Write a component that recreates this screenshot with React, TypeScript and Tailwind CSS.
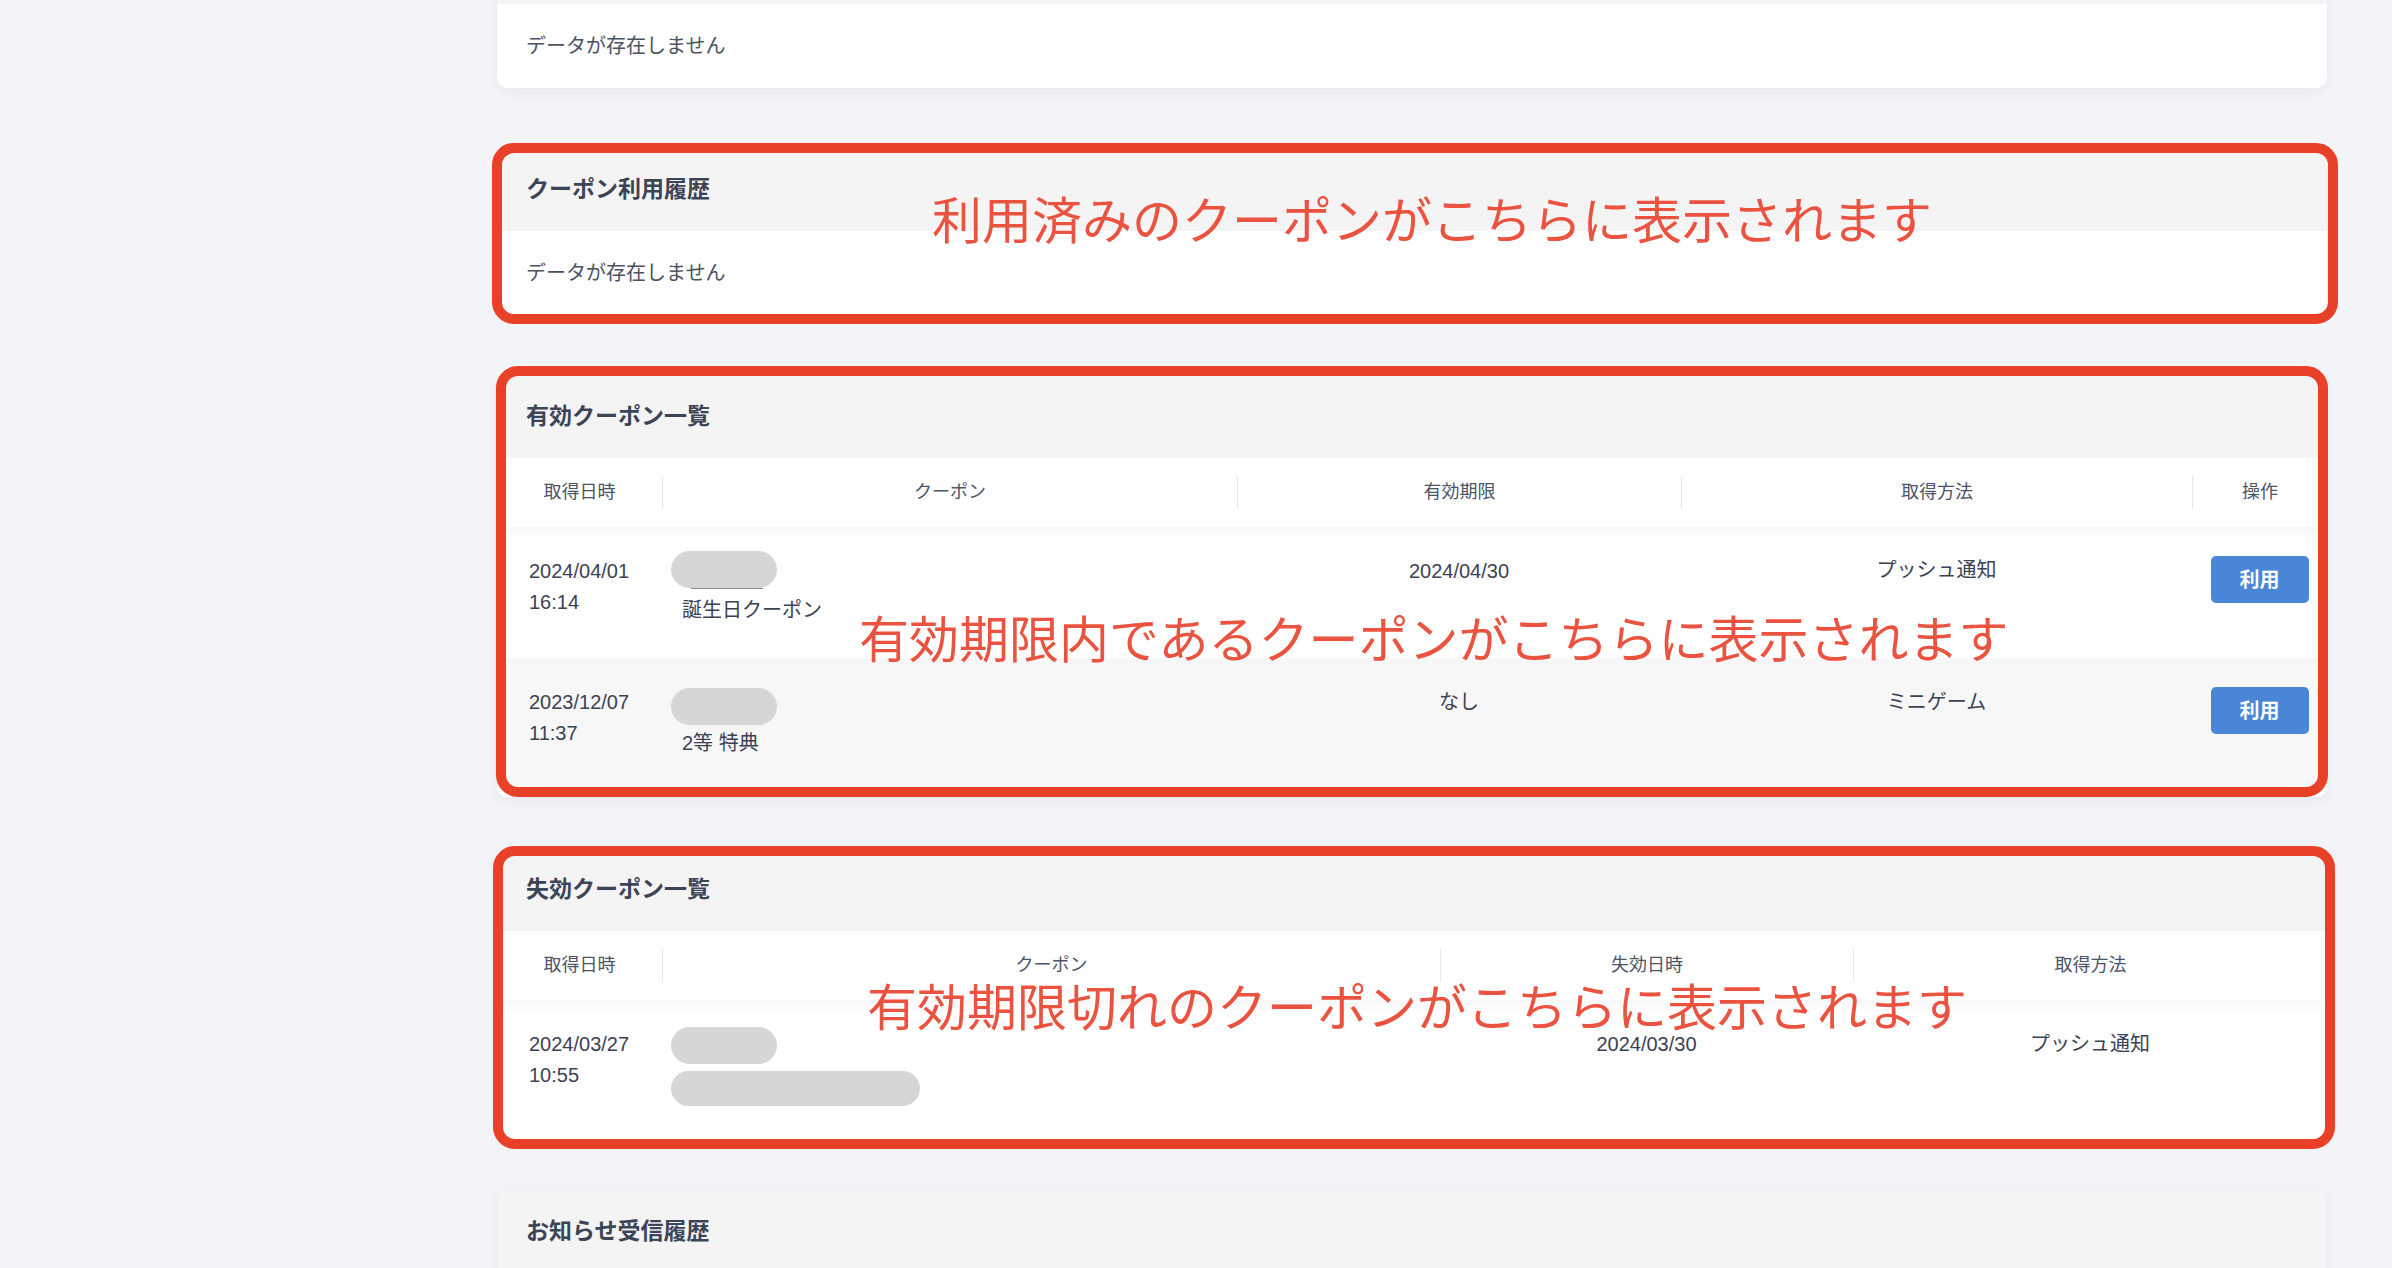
import type { ReactNode } from "react";

const font = "font-['Liberation_Sans','Noto_Sans_CJK_JP',sans-serif]";

function CardHeader({ title }: { title?: string }) {
  return (
    <div className="flex h-[82px] items-center bg-[#f4f4f5] px-[29px]">
      {title && <h2 className="-mt-[2px] text-[23px] font-bold text-[#3c4457]">{title}</h2>}
    </div>
  );
}

function Card({ children, className = "" }: { children: ReactNode; className?: string }) {
  return (
    <div
      className={`overflow-hidden rounded-[10px] bg-white shadow-[0_3px_14px_rgba(30,40,70,0.06)] ${className}`}
    >
      {children}
    </div>
  );
}

function EmptyBody() {
  return (
    <div className="flex h-[83px] items-center px-[29px] text-[20px] text-[#4b5263]">
      データが存在しません
    </div>
  );
}

function HeadRow({ cols }: { cols: { label: string; w: string }[] }) {
  return (
    <div className="relative z-10 flex h-[69px] items-center bg-white shadow-[0_6px_10px_rgba(0,0,0,0.035)]">
      {cols.map((c, i) => (
        <div
          key={c.label}
          className={`flex h-[33px] items-center justify-center text-[18px] text-[#4b5468] ${c.w} ${
            i > 0 ? "border-l border-[#e5e7eb]" : ""
          }`}
        >
          {c.label}
        </div>
      ))}
    </div>
  );
}

function DateCell({ date, time }: { date: string; time: string }) {
  return (
    <div className="w-[165px] pl-[32px] pt-[5px] text-[20px] leading-[31px] text-[#3b4255]">
      <div>{date}</div>
      <div>{time}</div>
    </div>
  );
}

function UseButton() {
  return (
    <button className="mt-[5px] flex h-[47px] w-[98px] items-center justify-center rounded-[5px] bg-[#4a86d8] text-[20px] font-bold text-white">
      利用
    </button>
  );
}

function Note({
  text,
  box,
  pos,
}: {
  text: string;
  box: string;
  pos: string;
}) {
  return (
    <>
      <div
        className={`pointer-events-none absolute z-20 rounded-[22px] border-[10px] border-[#e94128] ${box}`}
      />
      <div
        className={`pointer-events-none absolute z-30 whitespace-nowrap font-['Noto_Sans_CJK_JP',sans-serif] text-[50px] leading-none text-[#ea5340] ${pos}`}
      >
        {text}
      </div>
    </>
  );
}

export default function App() {
  const validCols = [
    { label: "取得日時", w: "w-[165px]" },
    { label: "クーポン", w: "w-[575px]" },
    { label: "有効期限", w: "w-[444px]" },
    { label: "取得方法", w: "w-[511px]" },
    { label: "操作", w: "w-[135px]" },
  ];
  const expiredCols = [
    { label: "取得日時", w: "w-[165px]" },
    { label: "クーポン", w: "w-[778px]" },
    { label: "失効日時", w: "w-[413px]" },
    { label: "取得方法", w: "w-[474px]" },
  ];

  return (
    <div className={`h-[1268px] overflow-hidden bg-[#f3f4f8] ${font}`}>
      <div className="flex w-[2327px] flex-col pl-[497px]">
        {/* 上部（スクロール済み） */}
        <Card className="-mt-[78px]">
          <CardHeader />
          <div className="flex h-[84px] items-center px-[29px] text-[20px] text-[#4b5263]">
            データが存在しません
          </div>
        </Card>

        {/* クーポン利用履歴 */}
        <div className="relative mt-[61px]">
          <Card>
            <CardHeader title="クーポン利用履歴" />
            <EmptyBody />
          </Card>
          <Note
            text="利用済みのクーポンがこちらに表示されます"
            box="-left-[5px] -right-[11px] -top-[6px] -bottom-[10px]"
            pos="left-[435px] top-[43px]"
          />
        </div>

        {/* 有効クーポン一覧 */}
        <div className="relative mt-[62px]">
          <Card className="bg-[#f4f4f5] pb-[8px]">
            <CardHeader title="有効クーポン一覧" />
            <HeadRow cols={validCols} />
            <div className="flex h-[131px] bg-white pt-[24px]">
              <DateCell date="2024/04/01" time="16:14" />
              <div className="w-[575px] pl-[9px]">
                <div className="h-[37px] w-[106px] rounded-full bg-[#d6d6d6]" />
                <div className="ml-[20px] h-px w-[72px] bg-[#8c8c8c]" />
                <div className="mt-[6px] pl-[11px] text-[20px] leading-[31px] text-[#3b4255]">
                  誕生日クーポン
                </div>
              </div>
              <div className="w-[444px] pt-[5px] text-center text-[20px] leading-[31px] text-[#3b4255]">
                2024/04/30
              </div>
              <div className="w-[511px] pt-[4px] text-center text-[20px] leading-[31px] text-[#3b4255]">
                プッシュ通知
              </div>
              <div className="flex w-[135px] justify-center">
                <UseButton />
              </div>
            </div>
            <div className="flex h-[131px] bg-[#f7f7f8] pt-[24px]">
              <DateCell date="2023/12/07" time="11:37" />
              <div className="w-[575px] pl-[9px] pt-[6px]">
                <div className="h-[37px] w-[106px] rounded-full bg-[#d6d6d6]" />
                <div className="mt-[3px] pl-[11px] text-[20px] leading-[31px] text-[#3b4255]">
                  2等 特典
                </div>
              </div>
              <div className="w-[444px] pt-[5px] text-center text-[20px] leading-[31px] text-[#3b4255]">
                なし
              </div>
              <div className="w-[511px] pt-[5px] text-center text-[20px] leading-[31px] text-[#3b4255]">
                ミニゲーム
              </div>
              <div className="flex w-[135px] justify-center">
                <UseButton />
              </div>
            </div>
          </Card>
          <Note
            text="有効期限内であるクーポンがこちらに表示されます"
            box="-left-px -right-px -top-[10px] bottom-0"
            pos="left-[362px] top-[235px]"
          />
        </div>

        {/* 失効クーポン一覧 */}
        <div className="relative mt-[52px]">
          <Card className="bg-[#eef0f3] pb-[8px]">
            <CardHeader title="失効クーポン一覧" />
            <HeadRow cols={expiredCols} />
            <div className="flex h-[131px] bg-white pt-[24px]">
              <DateCell date="2024/03/27" time="10:55" />
              <div className="w-[778px] pl-[9px] pt-[3px]">
                <div className="h-[37px] w-[106px] rounded-full bg-[#d6d6d6]" />
                <div className="mt-[7px] h-[35px] w-[249px] rounded-full bg-[#d6d6d6]" />
              </div>
              <div className="w-[413px] pt-[5px] text-center text-[20px] leading-[31px] text-[#3b4255]">
                2024/03/30
              </div>
              <div className="w-[474px] pt-[5px] text-center text-[20px] leading-[31px] text-[#3b4255]">
                プッシュ通知
              </div>
            </div>
          </Card>
          <Note
            text="有効期限切れのクーポンがこちらに表示されます"
            box="-left-[4px] -right-[8px] -top-[3px] -bottom-[10px]"
            pos="left-[370px] top-[130px]"
          />
        </div>

        {/* お知らせ受信履歴 */}
        <Card className="mt-[52px]">
          <CardHeader title="お知らせ受信履歴" />
          <EmptyBody />
        </Card>
      </div>
    </div>
  );
}
